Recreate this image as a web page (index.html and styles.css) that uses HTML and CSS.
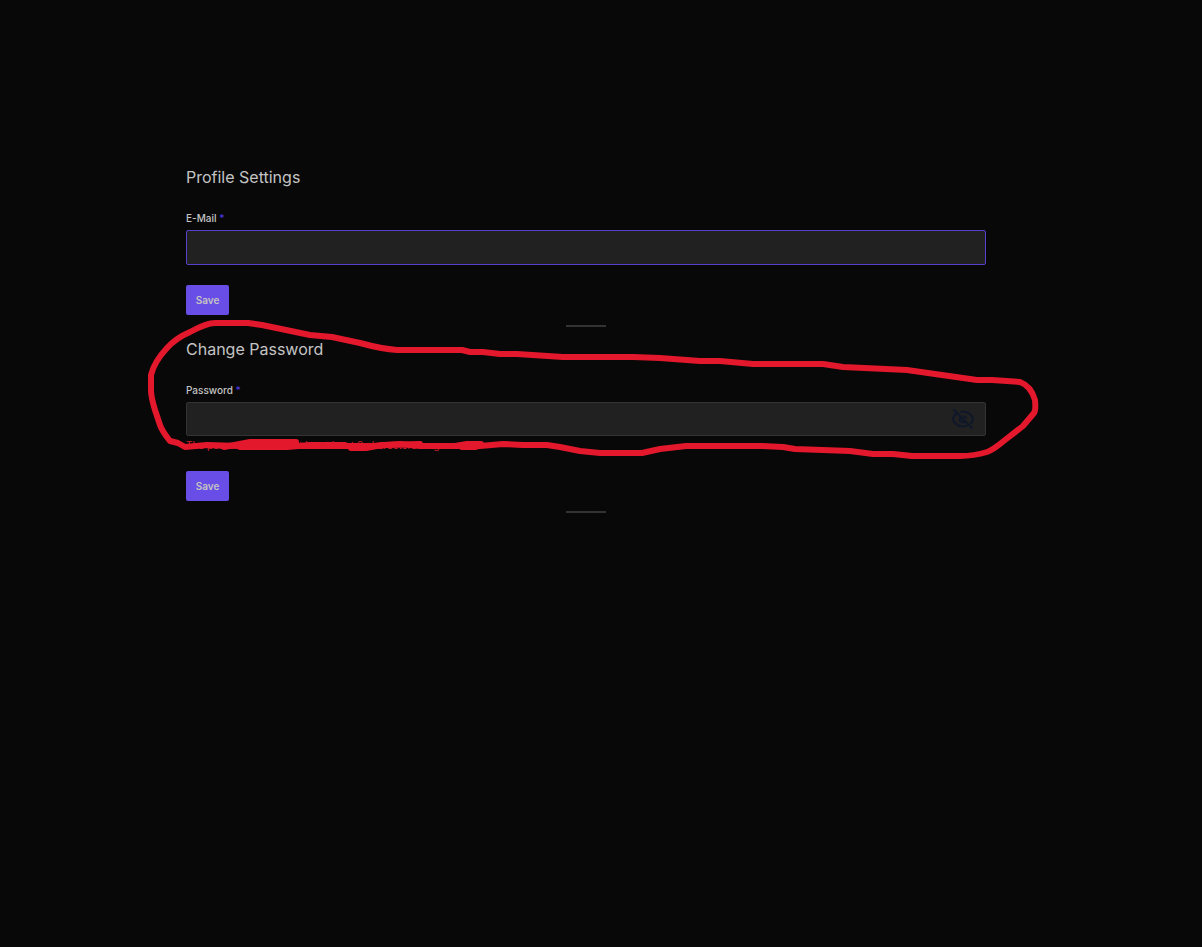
FILE: index.html
```html
<!DOCTYPE html>
<html lang="en">
<head>
  <meta charset="UTF-8" />
  <meta name="viewport" content="width=device-width, initial-scale=1.0" />
  <title>Profile Settings</title>
  <link rel="stylesheet" href="styles.css">
</head>
<body>
  <main class="settings">
    <form class="section">
      <h2>Profile Settings</h2>
      <label for="email">E-Mail <span class="required">*</span></label>
      <input class="field active" type="email" id="email">
      <button class="save" type="button">Save</button>
      <hr>
    </form>
    <form class="section">
      <h2>Change Password</h2>
      <label for="password">Password <span class="required">*</span></label>
      <div class="password">
        <input class="field" type="password" id="password">
        <button class="toggle" type="button" aria-label="Show password">
          <svg width="24" height="24" viewBox="0 0 24 24" fill="none" stroke="currentColor" stroke-width="2">
            <path d="M6.500 6C3.500 7.800 2 10.500 2 12c0 2.500 4 7.500 10 7.500 2 0 3.800-.6 5.300-1.500" />
            <path d="M9.500 4.800C10.300 4.600 11.100 4.500 12 4.500c6 0 10 5 10 7.500 0 1.300-1 3.100-2.700 4.600" />
            <path d="M9.500 10.500a3 3 0 0 0 4.200 4.200M12.500 9a3 3 0 0 1 2.500 2.500" />
            <path d="M2.500 2.500l19 19" />
          </svg>
        </button>
      </div>
      <p class="error">The password field must be at least 8 characters long.</p>
      <button class="save" type="button">Save</button>
      <hr>
    </form>
    <svg class="marker" width="900" height="150" viewBox="145 315 900 150" aria-hidden="true">
      <path d="M217 323H248L262 325L310 335L332 337L360 343Q382 349 397 350H462L470 352H483L500 354H517L563 357H633L660 358L700 361L720 361L753 364H823L843 367L907 370L977 380L992 380L1020 382Q1031 386 1035 400Q1036 410 1034 413L1023 426L1005 440Q993 450 987 452Q974 456 960 456H912L893 454H873L850 451L795 449L783 447L762 446H686L660 449L642 453H600L580 451L560 447L547 445H523L503 444L480 446H420L400 444L373 446H240L207 445L185 447L178 443L170 441Q162 431 160 425L155 410Q151 397 151 390V375Q154 362 167 348Q176 338 190 332Q208 322 217 323Z" />
      <path d="M224 447L250 442H296M240 447H287L310 445H345M351 448H366L382 445L420 444M426 446H455L467 444H481L476 447H462" />
    </svg>
  </main>
</body>
</html>
```

FILE: styles.css
```css
* {
  box-sizing: border-box;
}
body {
  margin: 0;
  padding: 164px 30px 0 0;
  min-height: 100vh;
  background: #080808;
  color: #c4c4c4;
  font-family: Inter, sans-serif;
  font-size: 10px;
}
.settings {
  position: relative;
  width: 100%;
  max-width: 800px;
  margin: 0 auto;
}
.section {
  display: flex;
  flex-direction: column;
  align-items: flex-start;
}
h2 {
  margin: 0 0 24px;
  font-size: 16px;
  font-weight: 400;
  line-height: 26px;
}
label {
  margin-bottom: 8px;
  font-weight: 500;
  line-height: 8px;
}
.required {
  color: #4f37e0;
}
.field {
  display: block;
  width: 100%;
  height: 35px;
  padding: 0 10px;
  border: 1px solid #333;
  border-radius: 2px;
  background: #212121;
  color: inherit;
  font: inherit;
  outline: none;
}
.field.active {
  border-color: #5940cc;
}
.password {
  position: relative;
  width: 100%;
}
.password .field {
  height: 34px;
}
.toggle {
  position: absolute;
  top: 5px;
  right: 11px;
  width: 24px;
  height: 24px;
  padding: 0;
  border: 0;
  background: none;
  color: #0f172a;
}
.toggle svg {
  display: block;
}
.error {
  margin: 3px 0 0;
  color: #d0202e;
  line-height: 12px;
}
.save {
  min-width: 43px;
  height: 30px;
  margin-top: 20px;
  padding: 0 9px 1px;
  border: 0;
  border-radius: 2px;
  background: #684de6;
  color: #c4c4c4;
  font: 600 10px Inter, sans-serif;
}
hr {
  width: 40px;
  height: 2px;
  margin: 10px auto 9px;
  border: 0;
  background: #333;
}
/* freehand ring around the password section */
.marker {
  position: absolute;
  top: 151px;
  left: -41px;
  fill: none;
  stroke: #e4182c;
  stroke-width: 6;
  stroke-linecap: round;
  stroke-linejoin: round;
  pointer-events: none;
}
```
